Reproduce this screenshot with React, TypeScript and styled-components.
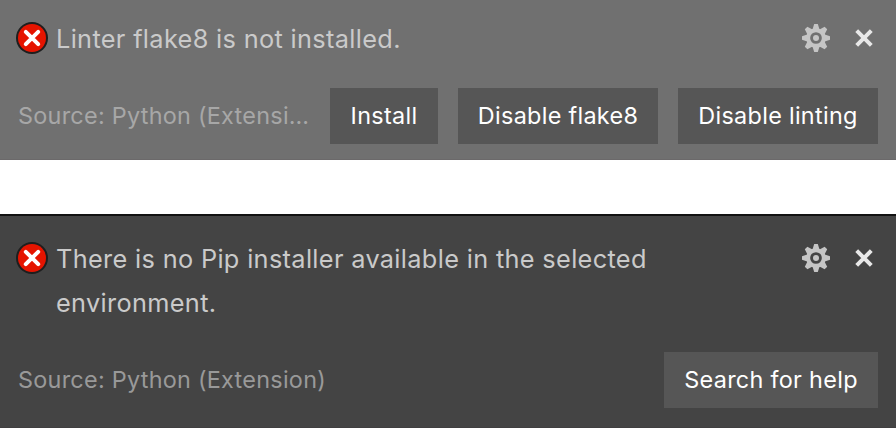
import React from "react";
import styled, { createGlobalStyle } from "styled-components";

const GlobalStyle = createGlobalStyle`
  * { box-sizing: border-box; }
  body { margin: 0; background: #fff; font-family: Inter, sans-serif; overflow: hidden; }
`;

const Stack = styled.main`
  display: flex;
  flex-direction: column;
  gap: 54px;
  width: 896px;
  height: 428px;
`;

const Toast = styled.section<{ $tone: "light" | "dark" }>`
  display: flex;
  flex-direction: column;
  justify-content: space-between;
  flex: none;
  height: ${(p) => (p.$tone === "light" ? 160 : 214)}px;
  padding: 16px 18px 15px 16px;
  background: ${(p) => (p.$tone === "light" ? "#707070" : "#444444")};
  border-top: ${(p) => (p.$tone === "light" ? "0" : "2px solid #121212")};
  border-bottom: 1px solid ${(p) => (p.$tone === "light" ? "#6b696a" : "#403f40")};
  ${(p) => p.$tone === "dark" && "padding-top: 20px; padding-bottom: 19px;"}
`;

const MessageRow = styled.div`
  display: flex;
  align-items: flex-start;
`;

const ErrorIcon = styled.svg`
  flex: none;
  width: 32px;
  height: 32px;
  margin: 6px 8px 0 0;
`;

const Message = styled.p`
  flex: 1;
  margin: 0;
  color: #cacaca;
  font-size: 25.3px;
  line-height: 44px;
  letter-spacing: 0.34px;
  padding-top: 1px;
  margin-bottom: -1px;
`;

const Tools = styled.div`
  display: flex;
  gap: 16px;
  padding-top: 6px;
  margin-right: -2px;
`;

const ToolButton = styled.button`
  display: flex;
  width: 32px;
  height: 32px;
  padding: 0;
  border: 0;
  background: none;
`;

const Footer = styled.div`
  display: flex;
  align-items: center;
  padding-left: 2px;
`;

const Source = styled.span<{ $tone: "light" | "dark" }>`
  flex: 1;
  min-width: 0;
  margin-right: 20px;
  overflow: hidden;
  text-overflow: ellipsis;
  white-space: nowrap;
  color: ${(p) => (p.$tone === "light" ? "#a7a7a7" : "#999999")};
  font-size: 23.4px;
  line-height: 34px;
  letter-spacing: 0.27px;
`;

const Actions = styled.div`
  display: flex;
  gap: 20px;
`;

const ActionButton = styled.button<{ $width: number }>`
  width: ${(p) => p.$width}px;
  height: 56px;
  padding: 0;
  border: 0;
  background: #565656;
  color: #fff;
  font: 400 23.4px/56px Inter, sans-serif;
  letter-spacing: 0.3px;
  white-space: nowrap;
`;

const teeth = [0, 45, 90, 135, 180, 225, 270, 315];

function Gear() {
  return (
    <svg width="32" height="32" viewBox="0 0 32 32" fill="#c5c5c5">
      {teeth.map((a) => (
        <path key={a} d="M12.3 8L14.2 2H17.8L19.7 8Z" transform={`rotate(${a} 16 16)`} />
      ))}
      <circle cx="16" cy="16" r="7.8" fill="none" stroke="#c5c5c5" strokeWidth="3.9" />
      <circle cx="16" cy="16" r="3" />
    </svg>
  );
}

function Close() {
  return (
    <svg width="32" height="32" viewBox="0 0 32 32" stroke="#e8e8e8" strokeWidth="4">
      <path d="M8.7 8.7L23.3 23.3M23.3 8.7L8.7 23.3" />
    </svg>
  );
}

type NoticeProps = {
  tone: "light" | "dark";
  message: string;
  source: string;
  actions: { label: string; width: number }[];
};

function Notice({ tone, message, source, actions }: NoticeProps) {
  return (
    <Toast $tone={tone}>
      <MessageRow>
        <ErrorIcon viewBox="0 0 32 32">
          <circle cx="16" cy="16" r="16" fill="#1e1e1e" />
          <circle cx="16" cy="16" r="14" fill="#e51400" />
          <path
            d="M9.8 9.8L22.2 22.2M22.2 9.8L9.8 22.2"
            stroke="#fff"
            strokeWidth="4"
            strokeLinecap="round"
          />
        </ErrorIcon>
        <Message>{message}</Message>
        <Tools>
          <ToolButton aria-label="Configure"><Gear /></ToolButton>
          <ToolButton aria-label="Close"><Close /></ToolButton>
        </Tools>
      </MessageRow>
      <Footer>
        <Source $tone={tone}>{source}</Source>
        <Actions>
          {actions.map((a) => (
            <ActionButton key={a.label} $width={a.width}>{a.label}</ActionButton>
          ))}
        </Actions>
      </Footer>
    </Toast>
  );
}

export default function App() {
  return (
    <>
      <GlobalStyle />
      <Stack>
        <Notice
          tone="light"
          message="Linter flake8 is not installed."
          source="Source: Python (Extension)"
          actions={[
            { label: "Install", width: 108 },
            { label: "Disable flake8", width: 200 },
            { label: "Disable linting", width: 200 },
          ]}
        />
        <Notice
          tone="dark"
          message="There is no Pip installer available in the selected environment."
          source="Source: Python (Extension)"
          actions={[{ label: "Search for help", width: 214 }]}
        />
      </Stack>
    </>
  );
}
